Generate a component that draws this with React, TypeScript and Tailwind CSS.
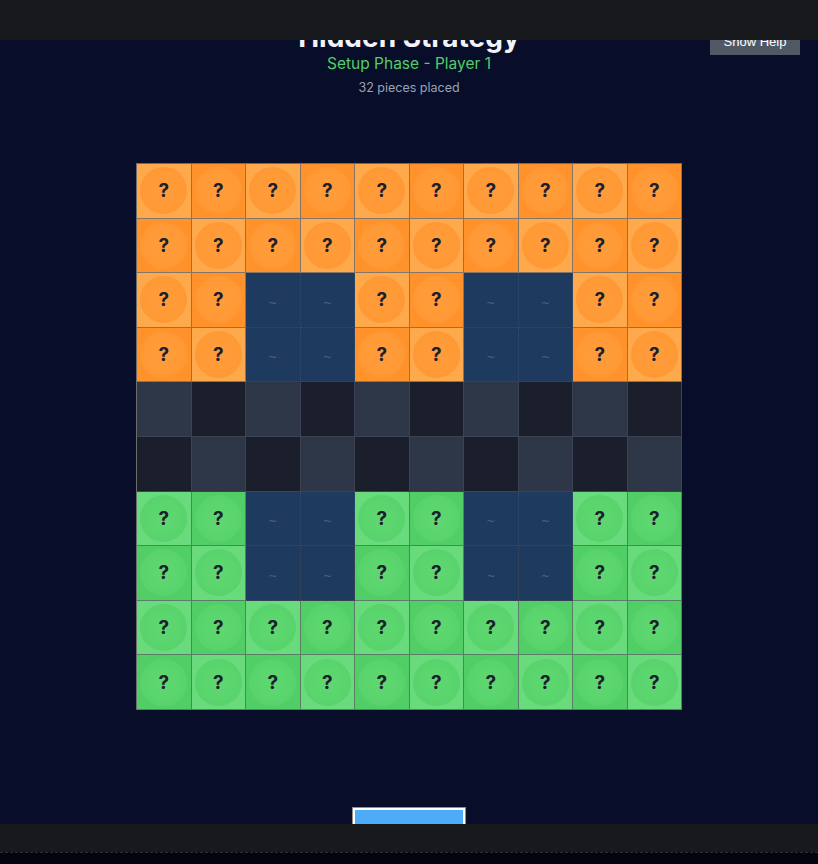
import React from "react";

const ROWS = 10;
const COLS = 10;
const WATER_COLS = [2, 3, 6, 7];
const WATER_ROWS = [2, 3, 6, 7];

type Kind = "red" | "blue" | "water" | "empty";

function cellKind(r: number, c: number): Kind {
  if (WATER_ROWS.includes(r) && WATER_COLS.includes(c)) return "water";
  if (r < 4) return "red";
  if (r > 5) return "blue";
  return "empty";
}

function Cell({ r, c }: { r: number; c: number }) {
  const kind = cellKind(r, c);
  const even = (r + c) % 2 === 0;

  if (kind === "water") {
    return (
      <div className="h-[54.6px] border-r border-b border-dotted border-[#3c4a60] bg-[#1e3a5f] flex items-center justify-center">
        <span className="text-[11px] text-[#4b6384] mt-2 font-['DejaVu_Sans',sans-serif]">~</span>
      </div>
    );
  }

  if (kind === "empty") {
    return (
      <div
        className={
          "h-[54.6px] border-r border-b border-[#3a4253] " +
          (even ? "bg-[#2d3748]" : "bg-[#1a1f2b]")
        }
      />
    );
  }

  const isRed = kind === "red";
  const bg = isRed ? (even ? "bg-[#ffa94d]" : "bg-[#ff922b]") : even ? "bg-[#69db7c]" : "bg-[#51cf66]";
  const ring = isRed
    ? "bg-[radial-gradient(circle,#ff9c3c_0%,#ff9a36_55%,#ff9530_100%)]"
    : "bg-[radial-gradient(circle,#5fd872_0%,#5ad46d_55%,#55d069_100%)]";
  const line = isRed ? "border-[#857566]" : "border-[#5a7d68]";

  return (
    <div className={"h-[54.6px] border-r border-b flex items-center justify-center " + bg + " " + line}>
      <div className={"w-[47px] h-[47px] rounded-full flex items-center justify-center " + ring}>
        <span className="text-[19px] font-bold text-[#1a202c] font-['Inter',sans-serif] leading-none">?</span>
      </div>
    </div>
  );
}

export default function App() {
  return (
    <div className="relative min-h-[864px] bg-[#080d29] font-['Inter',sans-serif]">
      {/* top chrome bar */}
      <div className="fixed top-0 left-0 right-0 h-10 bg-[#18191c] z-20" />

      <button className="absolute top-[28px] right-[18px] w-[90px] h-[27px] bg-[#4f5864] text-white text-[13px] font-['Liberation_Sans',sans-serif] pt-[1px]">
        Show Help
      </button>

      <div className="flex flex-col items-center pt-[19px]">
        <h1 className="text-[28px] leading-[36px] font-bold text-[#f1f3f6]">Hidden Strategy</h1>
        <p className="text-[15.5px] leading-[24px] text-[#51cf66] -mt-[3px]">Setup Phase - Player 1</p>
        <p className="text-[12.5px] leading-[20px] text-[#9aa3b2] mt-[2px]">32 pieces placed</p>

        <div className="mt-[65px] w-[546px] grid grid-cols-10 border-l border-t border-[#6d6d6d]">
          {Array.from({ length: ROWS }).map((_, r) =>
            Array.from({ length: COLS }).map((_, c) => <Cell key={r + "-" + c} r={r} c={c} />)
          )}
        </div>

        <button className="mt-[98px] w-[112px] h-[40px] bg-[#4dabf7] border-2 border-white outline outline-1 outline-[#8a8f99] text-white" />
      </div>

      {/* bottom chrome bar */}
      <div className="fixed left-0 right-0 bottom-0 z-20">
        <div className="h-[28px] bg-[#18191c]" />
        <div className="h-[12px] bg-[#04040f] border-t border-dashed border-[#2a2d3a]" />
      </div>
    </div>
  );
}
